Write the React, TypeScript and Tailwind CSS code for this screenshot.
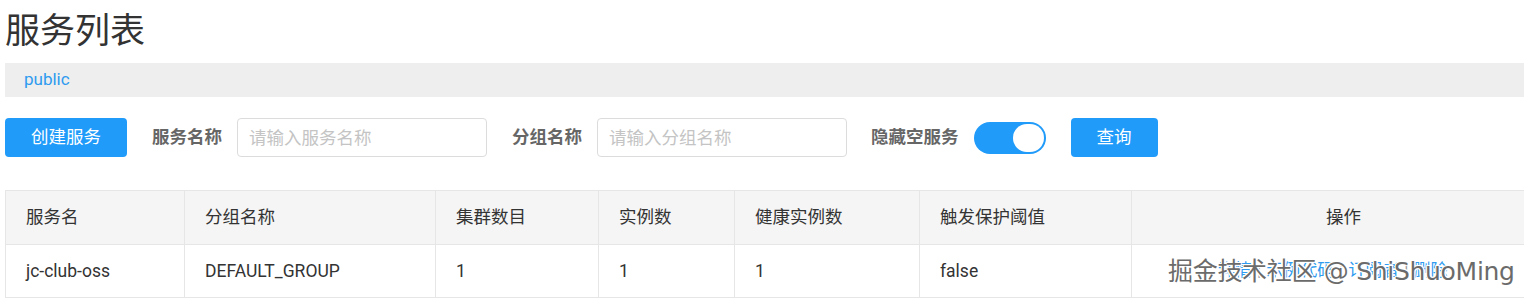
const cols = [
  { label: "服务名", w: "w-[179px]" },
  { label: "分组名称", w: "w-[251px]" },
  { label: "集群数目", w: "w-[163px]" },
  { label: "实例数", w: "w-[136px]" },
  { label: "健康实例数", w: "w-[185px]" },
  { label: "触发保护阈值", w: "w-[212px]" },
]

const row = ["jc-club-oss", "DEFAULT_GROUP", "1", "1", "1", "false"]

function Field({ label, placeholder }: { label: string; placeholder: string }) {
  return (
    <div className="flex items-center">
      <span className="mr-[15px] text-[17.5px] font-bold text-[#666]">{label}</span>
      <input
        className="h-[39px] w-[250px] rounded-[4px] border border-[#dcdcdc] px-[11px] text-[17.5px] text-[#333] outline-none placeholder:text-[#c4c4c4]"
        placeholder={placeholder}
      />
    </div>
  )
}

export default function App() {
  return (
    <div className="w-[1524px] overflow-hidden bg-white pl-[5px] font-['Roboto','Noto_Sans_CJK_SC',sans-serif] text-[#333]">
      <h1 className="h-[63px] pt-[10px] text-[35px] leading-[44px] font-normal">服务列表</h1>
      <div className="flex h-[34px] items-center bg-[#eeeeee] pl-[19px] text-[17px] text-[#2e9bf0]">public</div>

      <div className="mt-[21px] flex items-center">
        <button className="h-[39px] w-[122px] rounded-[4px] bg-[#209bfa] text-[17.5px] text-white">创建服务</button>
        <div className="ml-[25px]">
          <Field label="服务名称" placeholder="请输入服务名称" />
        </div>
        <div className="ml-[25px]">
          <Field label="分组名称" placeholder="请输入分组名称" />
        </div>
        <span className="ml-[24px] text-[17.5px] font-bold text-[#666]">隐藏空服务</span>
        <div className="ml-[15px] flex h-[32px] w-[72px] items-center justify-end rounded-full bg-[#209bfa] p-[2px]">
          <div className="h-[28px] w-[31px] rounded-full bg-white" />
        </div>
        <button className="ml-[25px] h-[39px] w-[87px] rounded-[4px] bg-[#209bfa] text-[17.5px] text-white">查询</button>
      </div>

      <div className="mt-[33px] w-[1550px] border-t border-l border-[#e6e6e6]">
        <div className="flex h-[54px] border-b border-[#e6e6e6] bg-[#f5f5f5] text-[17.5px]">
          {cols.map((c) => (
            <div key={c.label} className={`${c.w} flex items-center border-r border-[#e6e6e6] pl-[20px]`}>
              {c.label}
            </div>
          ))}
          <div className="flex flex-1 items-center justify-center">操作</div>
        </div>
        <div className="flex h-[53px] border-b border-[#e6e6e6] text-[17.5px]">
          {row.map((v, i) => (
            <div key={i} className={`${cols[i].w} flex items-center border-r border-[#e6e6e6] pl-[20px]`}>
              {v}
            </div>
          ))}
          <div className="relative flex flex-1 items-center pl-[86px]">
            <div className="flex gap-[5px] text-[17px] text-[#2e9bf0]">
              <span>详情</span>
              <span className="text-[#999]">|</span>
              <span>示例代码</span>
              <span className="text-[#999]">|</span>
              <span>订阅者</span>
              <span className="text-[#999]">|</span>
              <span>删除</span>
            </div>
            <span className="absolute top-[8px] left-[36px] font-['DejaVu_Sans','Noto_Sans_CJK_SC',sans-serif] text-[25px] tracking-[-0.3px] whitespace-nowrap text-[#6b6b6b] [text-shadow:1px_1px_0_#fff,-1px_-1px_0_#fff,1px_-1px_0_#fff,-1px_1px_0_#fff]">
              掘金技术社区 @ ShiShuoMing
            </span>
          </div>
        </div>
      </div>
    </div>
  )
}
